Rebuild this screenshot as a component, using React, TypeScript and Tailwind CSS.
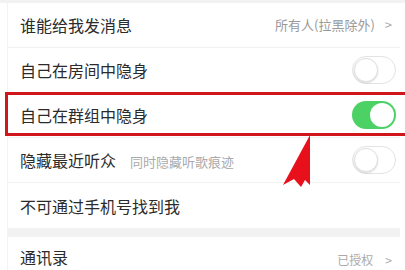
import React from "react"

function Toggle({ on }: { on?: boolean }) {
  if (on) {
    return (
      <div className="w-[44px] h-[28px] rounded-full bg-[#4cd264] flex items-center justify-end p-[2px]">
        <div className="w-[24px] h-[24px] rounded-full bg-white" />
      </div>
    )
  }
  return (
    <div className="w-[44px] h-[28px] rounded-full bg-white border-[1.5px] border-[#e3e3e3] flex items-center p-[1px]">
      <div className="w-[24px] h-[24px] rounded-full bg-white border border-[#e0e0e0] shadow-[0_1px_2px_rgba(0,0,0,0.15)]" />
    </div>
  )
}

function Row({
  label,
  sub,
  right,
  last,
}: {
  label: string
  sub?: string
  right?: React.ReactNode
  last?: boolean
}) {
  return (
    <div className={`h-[45px] flex items-center justify-between pl-[12px] pr-[4px] ${last ? "" : "border-b border-[#f1f1f1]"}`}>
      <div className="flex items-baseline gap-[14px]">
        <span className="text-[16px] text-[#2b2b2b]">{label}</span>
        {sub && <span className="text-[13px] text-[#aaa]">{sub}</span>}
      </div>
      {right}
    </div>
  )
}

export default function App() {
  return (
    <div
      className="w-[405px] h-[270px] overflow-hidden bg-white relative"
      style={{ fontFamily: '"Noto Sans CJK SC", "Noto Sans", sans-serif' }}
    >
      <div className="h-[3px] bg-[#f2f2f2]" />
      <div className="ml-[7px] mr-[5px] border-l border-[#f3f3f3]">
        <Row
          label="谁能给我发消息"
          right={
            <div className="flex items-center gap-[10px] text-[13px] text-[#999] pr-[4px]">
              <span>所有人(拉黑除外)</span>
              <span className="text-[#aaa]">&gt;</span>
            </div>
          }
        />
        <Row label="自己在房间中隐身" right={<Toggle />} />
        <Row label="自己在群组中隐身" right={<Toggle on />} />
        <Row label="隐藏最近听众" sub="同时隐藏听歌痕迹" right={<Toggle />} />
        <Row label="不可通过手机号找到我" last />
        <div className="h-[9px] bg-[#f2f2f2]" />
        <div className="h-[40px] flex items-center justify-between pl-[12px] pr-[8px]">
          <span className="text-[16px] text-[#2b2b2b]">通讯录</span>
          <div className="flex items-center gap-[12px] text-[12px] text-[#aaa] pt-[6px]">
            <span>已授权</span>
            <span>&gt;</span>
          </div>
        </div>
      </div>

      {/* annotation box */}
      <div className="absolute left-[5px] top-[92px] w-[410px] h-[44px] border-[3px] border-[#d0161b] pointer-events-none" />
      {/* annotation arrow */}
      <svg className="absolute left-[270px] top-[133px]" width="50" height="60" viewBox="0 0 50 60">
        <polygon points="40,2 40,52 35,47 31,54 24,46 13,52" fill="#e8101a" />
      </svg>
    </div>
  )
}
